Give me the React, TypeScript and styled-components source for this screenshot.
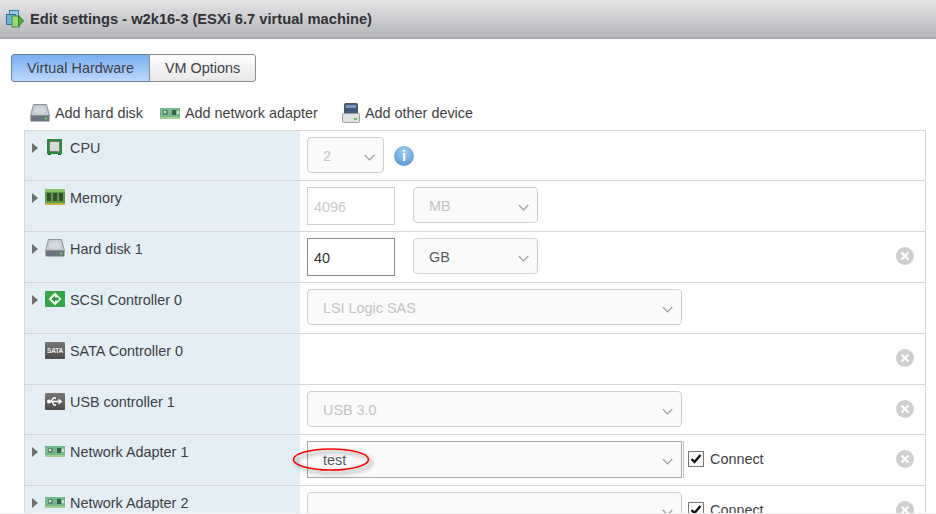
import {ReactElement, ReactNode} from "react";
import styled, {createGlobalStyle} from "styled-components";

const GlobalStyle = createGlobalStyle`
  html, body {
    margin: 0;
    height: 514px;
    overflow: hidden;
    background: #fff;
  }
  body {
    font-family: "Liberation Sans", Arial, sans-serif;
    font-size: 14.4px;
    color: #333;
  }
`

// Styled Components
const Page = styled.div`
  width: 936px;
  height: 513px;
  overflow: hidden;
  border-bottom: 1px solid #eef0f2;
  display: flex;
  flex-direction: column;
`

const TitleBar = styled.header`
  flex: none;
  height: 38px;
  padding-left: 6px;
  display: flex;
  align-items: center;
  gap: 6px;
  background: linear-gradient(#e4e4e6, #b4b5b8);
  border-bottom: 1px solid #a3a3a3;
`

const Title = styled.h1`
  margin: 0;
  font-size: 14.7px;
  font-weight: bold;
  color: #303236;
`

const Tabs = styled.div`
  flex: none;
  display: flex;
  align-self: flex-start;
  margin: 15px 0 0 11px;
  height: 28px;
`

const Tab = styled.div<{ $active?: boolean }>`
  box-sizing: border-box;
  display: flex;
  align-items: center;
  justify-content: center;
  width: ${({$active}) => ($active ? "139px" : "107px")};
  margin-left: ${({$active}) => ($active ? "0" : "-1px")};
  border: 1px solid ${({$active}) => ($active ? "#6b7f99" : "#8c8c8c")};
  border-radius: ${({$active}) => ($active ? "3px 0 0 3px" : "0 3px 3px 0")};
  background: ${({$active}) =>
    $active ? "linear-gradient(#7aaef0, #bcd9fc)" : "linear-gradient(#fdfdfd, #e9e9e9)"};
  color: #3d4146;
`

const Toolbar = styled.div`
  flex: none;
  height: 22px;
  margin-top: 20px;
  display: flex;
  align-items: center;
  padding-left: 30px;
  color: #3d3f42;
`

const ToolItem = styled.div<{ $width: number }>`
  width: ${({$width}) => $width}px;
  display: flex;
  align-items: center;
  gap: 5px;
`

const Table = styled.div`
  flex: none;
  margin: 6px 0 0 24px;
  width: 902px;
  box-sizing: border-box;
  border: 1px solid #d6d6d6;
  border-bottom: 0;
`

const Row = styled.div<{ $short?: boolean }>`
  height: ${({$short}) => ($short ? "50px" : "51px")};
  box-sizing: border-box;
  display: flex;
  border-bottom: 1px solid #d6d6d6;
`

const LabelCell = styled.div`
  flex: none;
  width: 275px;
  box-sizing: border-box;
  background: #e3eef5;
  padding: 7px 0 0 7px;
  display: flex;
  align-items: flex-start;
  color: #3c3f44;
`

const LabelText = styled.span`
  margin-top: 2px;
`

const Arrow = styled.span<{ $hidden?: boolean }>`
  flex: none;
  width: 0;
  height: 0;
  margin: 5px 0 0 0;
  border-style: solid;
  border-width: 5px 0 5px 6px;
  border-color: transparent transparent transparent ${({$hidden}) => ($hidden ? "transparent" : "#6f6f6f")};
`

const IconSlot = styled.span`
  flex: none;
  width: 32px;
  height: 18px;
  display: flex;
  align-items: center;
  justify-content: flex-end;
  padding-right: 5px;
  box-sizing: border-box;
`

const ControlCell = styled.div`
  flex: 1;
  padding: 6px 11px 0 7px;
  display: flex;
  align-items: flex-start;
  min-width: 0;
`

const Select = styled.div<{ $width: number; $disabled?: boolean; $focus?: boolean; $gap?: number }>`
  flex: none;
  box-sizing: border-box;
  width: ${({$width}) => $width}px;
  height: ${({$focus}) => ($focus ? "37px" : "36px")};
  margin-left: ${({$gap}) => $gap ?? 0}px;
  padding: ${({$focus}) => ($focus ? "1px 8px 0 15px" : "2px 8px 0 15px")};
  display: flex;
  align-items: center;
  justify-content: space-between;
  background: #fafafa;
  border: 1px solid ${({$focus}) => ($focus ? "#a9a9a9" : "#d0d0d0")};
  border-radius: ${({$focus}) => ($focus ? "0" : "4px")};
  color: ${({$disabled}) => ($disabled ? "#c3c3c3" : "#555a60")};
  ${({$focus}) => $focus && "box-shadow: 1px 0 0 0 #fff, 2px 0 0 0 #c4c4c4;"}
`

const NumberBox = styled.div<{ $active?: boolean }>`
  flex: none;
  box-sizing: border-box;
  width: 88px;
  height: 38px;
  padding: 1px 6px 0;
  display: flex;
  align-items: center;
  background: #fff;
  border: 1px solid ${({$active}) => ($active ? "#8a8a8a" : "#d0d0d0")};
  color: ${({$active}) => ($active ? "#333" : "#c9c9c9")};
`

const Chevron = styled.svg`
  flex: none;
  width: 11px;
  height: 7px;
  margin-top: 2px;
`

const ConnectLabel = styled.label`
  flex: none;
  margin: 9px 0 0 6px;
  display: flex;
  align-items: center;
  gap: 6px;
  color: #3c3f44;
`

const ConnectText = styled.span`
  margin-top: 1px;
`

const CheckBox = styled.span`
  width: 16px;
  height: 16px;
  box-sizing: border-box;
  border: 1px solid #767676;
  background: #fff;
  display: flex;
  align-items: center;
  justify-content: center;
`

const InfoBadge = styled.span`
  flex: none;
  width: 20px;
  height: 20px;
  margin: 9px 0 0 10px;
  border-radius: 50%;
  background: radial-gradient(circle at 50% 30%, #a4cdf0, #5d9ddb 75%);
  color: #fff;
  font-weight: bold;
  font-size: 15px;
  line-height: 20px;
  text-align: center;
`

const Remove = styled.svg`
  flex: none;
  margin: 9px 0 0 auto;
  width: 18px;
  height: 18px;
`

const Annotation = styled.svg`
  position: absolute;
  left: 290px;
  top: 445px;
  width: 90px;
  height: 34px;
  pointer-events: none;
`

const RedRing = styled.ellipse`
  fill: none;
  stroke: #f00;
  stroke-width: 1.6px;
  filter: drop-shadow(3px 3px 2px rgba(0, 0, 0, 0.45));
`

// Icons
const DiskIcon = (): ReactElement => (
    <svg width="20" height="18" viewBox="0 0 20 18">
        <path d="M3.500 0.500h13l3 11.500H0.500z" fill="#c3cad0" stroke="#8d959c"/>
        <ellipse cx="10" cy="6.500" rx="6" ry="3.500" fill="#d4d9dd"/>
        <rect x="0.500" y="11.500" width="19" height="6" rx="1" fill="#6c757e"/>
        <rect x="15" y="13.500" width="2" height="2" fill="#6fdc5f"/>
    </svg>
)

const NicIcon = (): ReactElement => (
    <svg width="20" height="11" viewBox="0 0 20 11">
        <rect x="0" y="0" width="20" height="9" fill="#74b98c"/>
        <rect x="0" y="9" width="20" height="2" fill="#a9cc93"/>
        <rect x="3" y="2" width="5" height="5" fill="#5f8a72"/>
        <rect x="4" y="3" width="2" height="2" fill="#e0ecd9"/>
        <rect x="12" y="2" width="4" height="5" fill="#3f5a50"/>
        <rect x="17" y="3" width="2" height="3" fill="#d0dfc8"/>
    </svg>
)

const OtherDeviceIcon = (): ReactElement => (
    <svg width="18" height="20" viewBox="0 0 18 20">
        <rect x="2.500" y="0.500" width="13" height="11" rx="1" fill="#3f5c7c" stroke="#555"/>
        <rect x="4" y="2" width="10" height="3" fill="#7c9cbc"/>
        <rect x="0.500" y="10.500" width="17" height="9" rx="1" fill="#dfe3e6" stroke="#9aa0a6"/>
        <rect x="12" y="15" width="3" height="2" fill="#62c957"/>
    </svg>
)

const CpuIcon = (): ReactElement => (
    <svg width="20" height="16" viewBox="0 0 20 16">
        <rect x="2" y="0" width="15" height="15" fill="#2a8a3a"/>
        <rect x="4.500" y="2.500" width="10" height="10" fill="#d8dad6" stroke="#6b7d6e"/>
        <path d="M3 15h3v1H3zM13 15h3v1h-3z" fill="#17602a"/>
    </svg>
)

const MemoryIcon = (): ReactElement => (
    <svg width="20" height="16" viewBox="0 0 20 16">
        <rect x="0" y="0" width="20" height="14" fill="#58a03f"/>
        <rect x="0" y="0" width="20" height="3" fill="#86c264"/>
        <rect x="2" y="4" width="4" height="8" fill="#3d4a33"/>
        <rect x="8" y="4" width="4" height="8" fill="#3d4a33"/>
        <rect x="14" y="4" width="4" height="8" fill="#3d4a33"/>
        <rect x="0" y="14" width="20" height="2" fill="#c9b04e"/>
    </svg>
)

const ScsiIcon = (): ReactElement => (
    <svg width="20" height="16" viewBox="0 0 20 16">
        <rect x="0" y="0" width="20" height="16" fill="#35a646"/>
        <path d="M10 1.500l6.500 6.500-6.500 6.500-6.500-6.500z" fill="#eef8ec"/>
        <path d="M10 4.500l-3.500 3.500 3.500 3.500v-2h3.500v-3h-3.500z" fill="#2f9440"/>
    </svg>
)

const ChipBox = styled.span`
  width: 20px;
  height: 17px;
  background: linear-gradient(#777, #4c4c4c);
  color: #eee;
  border-radius: 1px;
  display: flex;
  align-items: center;
  justify-content: center;
`

const SataText = styled.span`
  font-size: 6.5px;
  font-weight: bold;
  letter-spacing: -0.2px;
`

const SataIcon = (): ReactElement => (
    <ChipBox><SataText>SATA</SataText></ChipBox>
)

const UsbIcon = (): ReactElement => (
    <ChipBox>
        <svg width="16" height="11" viewBox="0 0 16 11">
            <path d="M1 5.500h13" stroke="#fff" strokeWidth="1.600"/>
            <path d="M11.500 2.500l4 3-4 3z" fill="#fff"/>
            <path d="M4 5.500l2.500-3.500h2.500M5 5.500l2 3.500h2" stroke="#fff" strokeWidth="1.300" fill="none"/>
            <circle cx="2" cy="5.500" r="2" fill="#fff"/>
        </svg>
    </ChipBox>
)

const ChevronDown = (): ReactElement => (
    <Chevron viewBox="0 0 11 7">
        <path d="M0.700 1l4.800 4.800L10.300 1" fill="none" stroke="#9a9fa4" strokeWidth="1.200"/>
    </Chevron>
)

const RemoveIcon = (): ReactElement => (
    <Remove viewBox="0 0 18 18">
        <circle cx="9" cy="9" r="9" fill="#cfcfcf"/>
        <path d="M5.500 5.500l7 7M12.500 5.500l-7 7" stroke="#fff" strokeWidth="2.200"/>
    </Remove>
)

const Connect = (): ReactElement => (
    <ConnectLabel>
        <CheckBox>
            <svg width="12" height="10" viewBox="0 0 12 10">
                <path d="M1.500 5l3 3 6-7" fill="none" stroke="#111" strokeWidth="2.400"/>
            </svg>
        </CheckBox>
        <ConnectText>Connect</ConnectText>
    </ConnectLabel>
)

// Data
type DeviceRow = { label: string; icon: ReactNode; expandable: boolean; short?: boolean; controls: ReactNode };

const rows: DeviceRow[] = [
    {
        label: "CPU",
        icon: <CpuIcon/>,
        expandable: true,
        short: true,
        controls: (
            <>
                <Select $width={77} $disabled>2<ChevronDown/></Select>
                <InfoBadge>i</InfoBadge>
            </>
        ),
    },
    {
        label: "Memory",
        icon: <MemoryIcon/>,
        expandable: true,
        controls: (
            <>
                <NumberBox>4096</NumberBox>
                <Select $width={125} $gap={18} $disabled>MB<ChevronDown/></Select>
            </>
        ),
    },
    {
        label: "Hard disk 1",
        icon: <DiskIcon/>,
        expandable: true,
        controls: (
            <>
                <NumberBox $active>40</NumberBox>
                <Select $width={125} $gap={18}>GB<ChevronDown/></Select>
                <RemoveIcon/>
            </>
        ),
    },
    {
        label: "SCSI Controller 0",
        icon: <ScsiIcon/>,
        expandable: true,
        controls: <Select $width={375} $disabled>LSI Logic SAS<ChevronDown/></Select>,
    },
    {
        label: "SATA Controller 0",
        icon: <SataIcon/>,
        expandable: false,
        controls: <RemoveIcon/>,
    },
    {
        label: "USB controller 1",
        icon: <UsbIcon/>,
        expandable: false,
        short: true,
        controls: (
            <>
                <Select $width={375} $disabled>USB 3.0<ChevronDown/></Select>
                <RemoveIcon/>
            </>
        ),
    },
    {
        label: "Network Adapter 1",
        icon: <NicIcon/>,
        expandable: true,
        controls: (
            <>
                <Select $width={375} $focus>test<ChevronDown/></Select>
                <Connect/>
                <RemoveIcon/>
            </>
        ),
    },
    {
        label: "Network Adapter 2",
        icon: <NicIcon/>,
        expandable: true,
        controls: (
            <>
                <Select $width={375}><span/><ChevronDown/></Select>
                <Connect/>
                <RemoveIcon/>
            </>
        ),
    },
]

const App = (): ReactElement => (
    <>
        <GlobalStyle/>
        <Page>
            <TitleBar>
                <svg width="18" height="18" viewBox="0 0 18 18">
                    <rect x="3.500" y="0.500" width="9" height="8" fill="#9cc8e8" stroke="#3d7cae"/>
                    <rect x="0.500" y="4.500" width="9" height="10" fill="#6fb0dc" stroke="#2f6f9f"/>
                    <rect x="6" y="6" width="7" height="11" fill="#9bd66f" stroke="#3f8f3f"/>
                    <path d="M12.500 5.500l5 5.500-5 5.500z" fill="#4fae36" stroke="#2f7f2f"/>
                </svg>
                <Title>Edit settings - w2k16-3 (ESXi 6.7 virtual machine)</Title>
            </TitleBar>
            <Tabs>
                <Tab $active>Virtual Hardware</Tab>
                <Tab>VM Options</Tab>
            </Tabs>
            <Toolbar>
                <ToolItem $width={130}><DiskIcon/>Add hard disk</ToolItem>
                <ToolItem $width={182}><NicIcon/>Add network adapter</ToolItem>
                <ToolItem $width={150}><OtherDeviceIcon/>Add other device</ToolItem>
            </Toolbar>
            <Table>
                {rows.map(row => (
                    <Row key={row.label} $short={row.short}>
                        <LabelCell>
                            <Arrow $hidden={!row.expandable}/>
                            <IconSlot>{row.icon}</IconSlot>
                            <LabelText>{row.label}</LabelText>
                        </LabelCell>
                        <ControlCell>{row.controls}</ControlCell>
                    </Row>
                ))}
            </Table>
            <Annotation viewBox="0 0 90 34">
                <RedRing cx="41" cy="14.500" rx="37.500" ry="10.500"/>
            </Annotation>
        </Page>
    </>
)

export default App
